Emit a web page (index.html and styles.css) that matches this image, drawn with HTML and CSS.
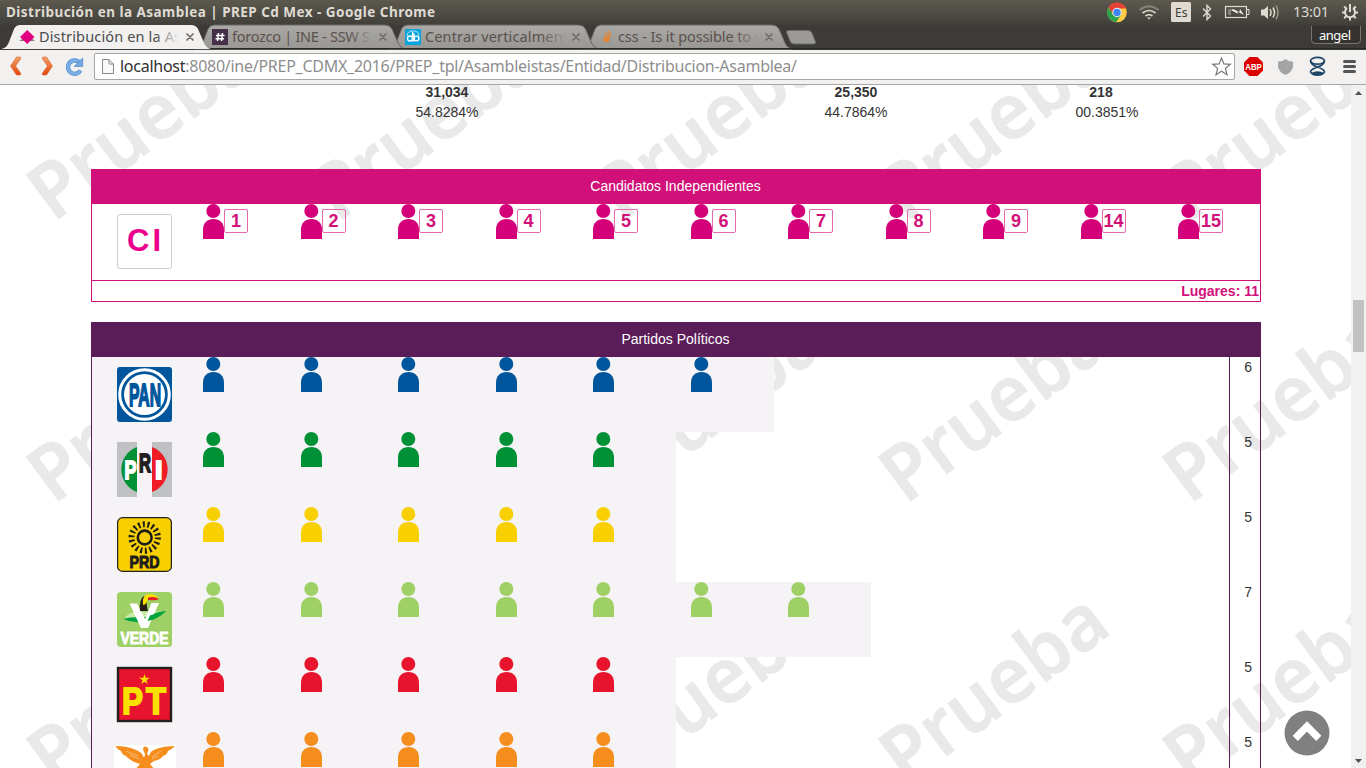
FILE: index.html
```html
<!DOCTYPE html>
<html lang="es">
<head>
<meta charset="utf-8">
<title>Distribución en la Asamblea | PREP Cd Mex</title>
<link rel="stylesheet" href="styles.css">
</head>
<body>
<svg class="defs" width="0" height="0">
  <defs>
    <symbol id="person" viewBox="0 0 21 35"><circle cx="10.3" cy="7" r="7"/><path d="M0 35V25.5C0 19 4.500 15 10.500 15S21 19 21 25.500V35z"/></symbol>
  </defs>
</svg>
<header class="browser">
  <svg class="frame" width="1366" height="50" viewBox="0 0 1366 50">
    <defs>
      <linearGradient id="bar" x1="0" y1="0" x2="0" y2="1"><stop offset="0" stop-color="#5d594f"/><stop offset="1" stop-color="#403f3a"/></linearGradient>
      <linearGradient id="idle" x1="0" y1="0" x2="0" y2="1"><stop offset="0" stop-color="#aaa9a6"/><stop offset="1" stop-color="#989793"/></linearGradient>
      <linearGradient id="fa" gradientUnits="userSpaceOnUse" x1="155" x2="179" y1="0" y2="0"><stop offset="0" stop-color="#4c4c4c"/><stop offset="1" stop-color="#f2f1f0"/></linearGradient>
      <linearGradient id="fb" gradientUnits="userSpaceOnUse" x1="348" x2="373" y1="0" y2="0"><stop offset="0" stop-color="#5c504b"/><stop offset="1" stop-color="#a09f9c"/></linearGradient>
      <linearGradient id="fc" gradientUnits="userSpaceOnUse" x1="541" x2="566" y1="0" y2="0"><stop offset="0" stop-color="#5c504b"/><stop offset="1" stop-color="#a09f9c"/></linearGradient>
      <linearGradient id="fd" gradientUnits="userSpaceOnUse" x1="734" x2="760" y1="0" y2="0"><stop offset="0" stop-color="#5c504b"/><stop offset="1" stop-color="#a09f9c"/></linearGradient>
      <path id="tab" d="M-12 49C-7 48-6 46-4 42L1 29Q3 25 7 25H178Q183 25 185 29L191 43Q193 48 198 49z"/>
    </defs>
    <rect width="1366" height="50" fill="#3c3b37"/>
    <rect width="1366" height="25" fill="url(#bar)"/>
    <use href="#tab" x="594" fill="url(#idle)" stroke="#686762"/>
    <use href="#tab" x="400.500" fill="url(#idle)" stroke="#686762"/>
    <use href="#tab" x="207" fill="url(#idle)" stroke="#686762"/>
    <path d="M0 48.500H1366" stroke="#282824"/>
    <use href="#tab" x="13" fill="#f2f1f0"/>
    <path d="M788.500 30.500H808Q811 30.500 812 33L815.500 42Q816 44 813.500 44H794Q791.500 44 790.500 42L786.800 33Q786 30.500 788.500 30.500z" fill="#9c9b98" stroke="#6b6a66"/>
    <text class="wintitle" x="6" y="17" textLength="429">Distribución en la Asamblea | PREP Cd Mex - Google Chrome</text>
    <!-- favicons -->
    <path d="M19 41L23 38.500H32L35 41z" fill="#8a7b84"/><path d="M27.200 30L34.500 37L27.200 44L20 37z" fill="#e0007f"/>
    <rect x="212" y="29" width="16" height="16" fill="#453049"/><path d="M218.500 33L217.500 41M222.500 33L221.500 41M216 35.500H224.500M215.500 38.700H224" stroke="#fff" stroke-width="1.500"/>
    <rect x="405" y="29" width="16" height="16" fill="#08a4dc"/><g fill="none" stroke="#fff" stroke-width="1.300"><circle cx="410" cy="38.500" r="2.500"/><path d="M412.600 32V41.500M414 33.500V41.500"/><circle cx="416.500" cy="38.500" r="2.400"/><path d="M407 36Q407 31 413 31T419 36" stroke-width=".7"/></g>
    <path d="M601.500 39V43H610V39" fill="none" stroke="#999" stroke-width="1"/><path d="M603 41.200H609M603.200 39L609 40M603.500 36.300L609.500 38.800M605 33L610 37.500M608 30.700L611 36" stroke="#f07d20" stroke-width="1.300"/>
    <text class="tabtext" x="39" y="42" textLength="142" fill="url(#fa)">Distribución en la As</text>
    <text class="tabtext" x="232" y="42" textLength="138" fill="url(#fb)">forozco | INE - SSW S</text>
    <text class="tabtext" x="425" y="42" textLength="143" fill="url(#fc)">Centrar verticalment</text>
    <text class="tabtext" x="618" y="42" textLength="144" fill="url(#fd)">css - Is it possible to v</text>
    <path d="M186.500 33.500L193.500 40.500M193.500 33.500L186.500 40.500M379.500 33.500L386.500 40.500M386.500 33.500L379.500 40.500M572.500 33.500L579.500 40.500M579.500 33.500L572.500 40.500M765.500 33.500L772.500 40.500M772.500 33.500L765.500 40.500" stroke="#6e6a67" stroke-width="1.600"/>
    <!-- system tray -->
    <circle cx="1117" cy="12.500" r="9.800" fill="#fc4"/>
    <path d="M1108.500 7.500A9.800 9.800 0 0 1 1126 8.500H1117L1112.500 14z" fill="#e34133"/><path d="M1108.500 7.500A9.800 9.800 0 0 0 1116 22.200L1121 15L1113 14.500z" fill="#2aa34f"/>
    <circle cx="1117" cy="12.500" r="4.700" fill="#f3f3f3"/><circle cx="1117" cy="12.500" r="3.700" fill="#4284f4"/>
    <g fill="none" stroke-width="1.700"><path d="M1139.500 10Q1149 2.500 1158.500 10" stroke="#85827a"/><path d="M1142.500 13Q1149 8 1155.500 13M1145.500 16Q1149 13.500 1152.500 16" stroke="#dfdbd2"/></g><path d="M1147 17.500H1151L1149 19.500z" fill="#dfdbd2"/>
    <rect x="1171" y="2" width="20" height="20" rx="1.500" fill="#dfdbd2"/><text class="tray" x="1175" y="17" textLength="12.500" lengthAdjust="spacingAndGlyphs" fill="#3c3b37">Es</text>
    <path d="M1203 8.500L1210.500 16L1207 19.500V5.500L1210.500 9L1203 16.500" fill="none" stroke="#dfdbd2" stroke-width="1.400"/>
    <rect x="1225.500" y="6.500" width="21" height="11" fill="none" stroke="#dfdbd2" stroke-width="1.200"/><path d="M1228 9H1231V15H1228z" fill="#85827a"/><path d="M1247 9.500H1249V14.500H1247" fill="none" stroke="#dfdbd2"/><path d="M1231 10L1238 14L1237 11.500L1244 15L1240 9L1239.500 12L1233 9z" fill="#eeeae1"/>
    <path d="M1261 9.500H1264L1268 6V19L1264 15.500H1261z" fill="#dfdbd2"/><path d="M1270 9Q1272 12.500 1270 16M1273 7.500Q1276 12.500 1273 17.500" fill="none" stroke="#dfdbd2" stroke-width="1.500"/><path d="M1276 5.500Q1280 12.500 1276 19.500" fill="none" stroke="#99958b" stroke-width="1.500"/>
    <text class="clock" x="1293" y="17" textLength="36">13:01</text>
    <g fill="none" stroke="#dfdbd2" stroke-width="2"><path d="M1347 8.300A5 5 0 1 0 1353 8.300M1350 4V12"/><path d="M1346.500 8.800L1344.200 6.500M1353.500 8.800L1355.800 6.500M1345 12.500H1342M1355 12.500H1358M1346.500 15.800L1344.200 18.200M1353.500 15.800L1355.800 18.200M1350 17.500V20.500"/></g>
    <path d="M1311.500 26V40Q1311.500 43.500 1315 43.500H1357Q1360.500 43.500 1360.500 40V26" fill="#34332f" stroke="#77756f"/>
    <text class="user" x="1319" y="40" textLength="32">angel</text>
  </svg>
  <div class="toolbar">
    <svg class="nav" width="94" height="34" viewBox="0 50 94 34">
      <defs><linearGradient id="or" x1="0" y1="0" x2="0" y2="1"><stop stop-color="#f2a267"/><stop offset="1" stop-color="#e5450c"/></linearGradient></defs>
      <path d="M16.500 57H20Q21.500 57 20.500 59L15.500 66L20.500 73Q21.500 75 20 75H16.500L10.500 66z" fill="url(#or)" stroke="#d8622b" stroke-width=".6"/>
      <path d="M46.500 57H43Q41.500 57 42.500 59L47.500 66L42.500 73Q41.500 75 43 75H46.500L52.500 66z" fill="url(#or)" stroke="#d8622b" stroke-width=".6"/>
      <path d="M80.500 70.500A6.700 6.700 0 1 1 79 62" fill="none" stroke="#5a8fce" stroke-width="4.400"/><path d="M80.500 70.500A6.700 6.700 0 1 1 79 62" fill="none" stroke="#78aee4" stroke-width="3"/><path d="M82.700 58V66.500H74z" fill="#70a7df" stroke="#4f86c8" stroke-width=".7"/>
    </svg>
    <div class="omnibox">
      <svg width="1139" height="25" viewBox="95 54 1139 25">
        <path d="M102.500 59.500H109L113.500 64V73.500H102.500z" fill="#fafafa" stroke="#888"/><path d="M109 59.500V64H113.500" fill="none" stroke="#888"/>
        <text class="url" x="120" y="72" textLength="677"><tspan fill="#303030">localhost</tspan>:8080/ine/PREP_CDMX_2016/PREP_tpl/Asambleistas/Entidad/Distribucion-Asamblea/</text>
        <path d="M1221.500 58L1223.900 63.900L1230.300 64.300L1225.400 68.400L1227 74.700L1221.500 71.200L1216 74.700L1217.600 68.400L1212.700 64.300L1219.100 63.900z" fill="#fff" stroke="#777" stroke-width="1.200"/>
      </svg>
    </div>
    <svg class="ext" width="131" height="34" viewBox="1235 50 131 34">
      <path d="M1249.500 57H1257.500L1263 62.500V70.500L1257.500 76H1249.500L1244 70.500V62.500z" fill="#d00"/><text class="abp" x="1245.300" y="70" textLength="16.500" lengthAdjust="spacingAndGlyphs">ABP</text>
      <path d="M1285.500 59Q1289 62 1293 61.500V67Q1292 72 1285.500 75Q1279 72 1278 67V61.500Q1282 62 1285.500 59z" fill="#a5a5a5"/>
      <g fill="none" stroke="#1f4566" stroke-width="1.700"><ellipse cx="1317.500" cy="60.800" rx="7" ry="3.400"/><path d="M1310.500 61.500Q1311.500 65 1317.500 67Q1324.500 69.500 1324.500 72Q1323 75.200 1317.500 75.200T1310.500 72Q1310.500 69.500 1317.500 67Q1323.500 65 1324.500 61.500"/></g><path d="M1311 73Q1317.500 69.500 1324 73Q1323 75 1317.500 75T1311 73z" fill="#1f4566"/>
      <path d="M1344.500 61.500H1354.500M1344.500 66.500H1354.500M1344.500 71.500H1354.500" stroke="#555" stroke-width="3" stroke-linecap="round"/>
    </svg>
  </div>
</header>
<div class="viewport">
  <main class="page">
    <svg class="watermark" width="1351" height="683" viewBox="0 85 1351 683">
      <defs><pattern id="mark" patternUnits="userSpaceOnUse" x="20" y="36" width="284" height="282"><text class="mark" transform="translate(33.400 187) rotate(-36.700)" textLength="260" lengthAdjust="spacingAndGlyphs">Prueba</text></pattern></defs>
      <rect y="85" width="1351" height="683" fill="url(#mark)"/>
    </svg>
    <div class="content">
      <div class="totals">
        <div><b>31,034</b><span>54.8284%</span></div>
        <div><b>25,350</b><span>44.7864%</span></div>
        <div class="last"><b>218</b><span>00.3851%</span></div>
      </div>
      <section class="panel pink">
        <h2>Candidatos Independientes</h2>
        <div class="row">
          <div class="logo"><svg width="55" height="55" viewBox="0 0 55 55"><rect x=".5" y=".5" width="54" height="54" rx="2.500" fill="#fff" stroke="#ccc"/><text class="ci" x="10" y="37" textLength="34">CI</text></svg></div>
          <div class="seat"><svg><use href="#person"/></svg><b>1</b></div>
          <div class="seat"><svg><use href="#person"/></svg><b>2</b></div>
          <div class="seat"><svg><use href="#person"/></svg><b>3</b></div>
          <div class="seat"><svg><use href="#person"/></svg><b>4</b></div>
          <div class="seat"><svg><use href="#person"/></svg><b>5</b></div>
          <div class="seat"><svg><use href="#person"/></svg><b>6</b></div>
          <div class="seat"><svg><use href="#person"/></svg><b>7</b></div>
          <div class="seat"><svg><use href="#person"/></svg><b>8</b></div>
          <div class="seat"><svg><use href="#person"/></svg><b>9</b></div>
          <div class="seat"><svg><use href="#person"/></svg><b>14</b></div>
          <div class="seat"><svg><use href="#person"/></svg><b>15</b></div>
        </div>
        <div class="sum">Lugares: 11</div>
      </section>
      <section class="panel purple">
        <h2>Partidos Políticos</h2>
        <div class="party pan">
          <div class="seats">
            <div class="logo"><svg width="55" height="55" viewBox="0 0 55 55"><rect width="55" height="55" rx="3" fill="#00569d"/><circle cx="27.500" cy="27.500" r="24.800" fill="none" stroke="#fff" stroke-width="3"/><circle cx="27.500" cy="27.500" r="20.500" fill="#fff"/><text class="heavy" x="12" y="38.500" font-size="31" textLength="32" lengthAdjust="spacingAndGlyphs" fill="#00569d" stroke="#00569d">PAN</text></svg></div>
            <div class="seat"><svg><use href="#person"/></svg></div><div class="seat"><svg><use href="#person"/></svg></div><div class="seat"><svg><use href="#person"/></svg></div><div class="seat"><svg><use href="#person"/></svg></div><div class="seat"><svg><use href="#person"/></svg></div><div class="seat"><svg><use href="#person"/></svg></div>
          </div>
          <div class="count">6</div>
        </div>
        <div class="party pri">
          <div class="seats">
            <div class="logo"><svg width="55" height="55" viewBox="0 0 55 55"><path d="M0 0H20V55H0zM35 0H55V55H35z" fill="#bfc1c2"/><path d="M20 5A24 24 0 0 0 20 50z" fill="#009136"/><path d="M35 5A24 24 0 0 1 35 50z" fill="#ef1c25"/><text class="heavy" x="7.500" y="36.500" font-size="25" textLength="12" lengthAdjust="spacingAndGlyphs" fill="#fff" stroke="#fff">P</text><text class="heavy" x="22" y="29.500" font-size="25" textLength="12" lengthAdjust="spacingAndGlyphs" fill="#231f20" stroke="#231f20">R</text><text class="heavy" x="38" y="36.500" font-size="25" textLength="7.500" lengthAdjust="spacingAndGlyphs" fill="#fff" stroke="#fff">I</text></svg></div>
            <div class="seat"><svg><use href="#person"/></svg></div><div class="seat"><svg><use href="#person"/></svg></div><div class="seat"><svg><use href="#person"/></svg></div><div class="seat"><svg><use href="#person"/></svg></div><div class="seat"><svg><use href="#person"/></svg></div>
          </div>
          <div class="count">5</div>
        </div>
        <div class="party prd">
          <div class="seats">
            <div class="logo"><svg width="55" height="55" viewBox="0 0 55 55"><rect x=".6" y=".6" width="53.800" height="53.800" rx="5" fill="#f8cf00" stroke="#222" stroke-width="1.200"/><circle cx="27.700" cy="20.500" r="6.900" fill="none" stroke="#1d1d1b" stroke-width="2.600"/><circle cx="27.700" cy="20.500" r="13.200" fill="none" stroke="#1d1d1b" stroke-width="6" stroke-dasharray="2 2.608"/><text class="heavy" x="12.500" y="50.500" font-size="17" textLength="30" lengthAdjust="spacingAndGlyphs" fill="#1d1d1b" stroke="#1d1d1b">PRD</text></svg></div>
            <div class="seat"><svg><use href="#person"/></svg></div><div class="seat"><svg><use href="#person"/></svg></div><div class="seat"><svg><use href="#person"/></svg></div><div class="seat"><svg><use href="#person"/></svg></div><div class="seat"><svg><use href="#person"/></svg></div>
          </div>
          <div class="count">5</div>
        </div>
        <div class="party verde">
          <div class="seats">
            <div class="logo"><svg width="55" height="55" viewBox="0 0 55 55"><rect width="55" height="55" rx="4" fill="#9fd065"/><path d="M7 27Q13 18 24 20L48 19Q40 27 25 28z" fill="#cde9a8"/><path d="M6 27Q15 24 26 26Q37 20 49 19Q39 29 24 30Q15 31 6 27z" fill="#00a33e"/><path d="M12.500 11.500H20L28 27L34.500 11H42L31 36H24z" fill="#fff"/><path d="M33 23.500Q41 20 49 19Q41 27 30.500 29z" fill="#00a33e"/><path d="M23 19Q22 7 27 4L30 7Q29 12 31 19z" fill="#251d17"/><path d="M26 13Q25 4 30 2.500Q39 1 42 7L31 6Q30 13 26 13z" fill="#f8df00"/><path d="M31 5.500Q38 4 42 7Q39 9 31 8z" fill="#e21c2a"/><text class="heavy" x="3.500" y="51.500" font-size="17" textLength="48" lengthAdjust="spacingAndGlyphs" fill="#fff" stroke="#fff">VERDE</text></svg></div>
            <div class="seat"><svg><use href="#person"/></svg></div><div class="seat"><svg><use href="#person"/></svg></div><div class="seat"><svg><use href="#person"/></svg></div><div class="seat"><svg><use href="#person"/></svg></div><div class="seat"><svg><use href="#person"/></svg></div><div class="seat"><svg><use href="#person"/></svg></div><div class="seat"><svg><use href="#person"/></svg></div>
          </div>
          <div class="count">7</div>
        </div>
        <div class="party pt">
          <div class="seats">
            <div class="logo"><svg width="55" height="55" viewBox="0 0 55 55"><rect x="1" y="1" width="53" height="53" fill="#e8132c" stroke="#231f20" stroke-width="2.400"/><path d="M27.500 7L28.700 10.800H32.800L29.500 13.200L30.700 17L27.500 14.700L24.300 17L25.500 13.200L22.200 10.800H26.300z" fill="#f9e100"/><text class="heavy" x="5" y="47" font-size="36" textLength="21" lengthAdjust="spacingAndGlyphs" fill="#f9e100" stroke="#f9e100">P</text><text class="heavy" x="29" y="47" font-size="36" textLength="20" lengthAdjust="spacingAndGlyphs" fill="#f9e100" stroke="#f9e100">T</text></svg></div>
            <div class="seat"><svg><use href="#person"/></svg></div><div class="seat"><svg><use href="#person"/></svg></div><div class="seat"><svg><use href="#person"/></svg></div><div class="seat"><svg><use href="#person"/></svg></div><div class="seat"><svg><use href="#person"/></svg></div>
          </div>
          <div class="count">5</div>
        </div>
        <div class="party mc">
          <div class="seats">
            <div class="logo wide"><svg width="62" height="55" viewBox="0 0 62 55"><rect y="3" width="62" height="52" fill="#fff"/><path d="M1 4Q14 4 22 8Q28 10 29.500 15Q31 15 31 12Q29 9 29 6Q31 3 34 6Q35 9 33 11Q34 14 35 14Q36 9 42 7Q50 4 61 4Q57 8 54 9Q53 13 49 14Q46 18 40 19L36 22L42 29L37 29L38 45H22V29L20 29L26 22Q16 19 12 14Q8 13 7 9Q4 8 1 4z" fill="#f68e1e"/><path d="M12 9L24 14M16 13L25 17M47 9L38 15M44 14L38 17" stroke="#fff" stroke-width=".4"/></svg></div>
            <div class="seat"><svg><use href="#person"/></svg></div><div class="seat"><svg><use href="#person"/></svg></div><div class="seat"><svg><use href="#person"/></svg></div><div class="seat"><svg><use href="#person"/></svg></div><div class="seat"><svg><use href="#person"/></svg></div>
          </div>
          <div class="count">5</div>
        </div>
      </section>
    </div>
    <svg class="totop" width="46" height="46" viewBox="0 0 46 46"><circle cx="23" cy="23" r="22.500" fill="#808080"/><path d="M11.200 28.300L23 16.500L34.800 28.300" fill="none" stroke="#fff" stroke-width="7.300"/></svg>
  </main>
  <div class="scrollbar"><svg width="15" height="683" viewBox="0 0 15 683"><path d="M4 10L7.500 6L11 10zM4 674L7.500 678L11 674z" fill="#505050"/><rect x="2" y="215" width="11" height="52" fill="#c1c1c1"/></svg></div>
</div>
</body>
</html>
```
FILE: styles.css
```css
* { box-sizing: border-box; }
html, body { height: 100%; }
body {
  margin: 0;
  overflow: hidden;
  display: flex;
  flex-direction: column;
  font: 14px/20px "Liberation Sans", Arial, sans-serif;
  color: #333;
  background: #fff;
}
svg { display: block; flex: none; }
.defs { position: absolute; }

.browser { flex: none; height: 85px; background: #f2f1f0; border-bottom: 1px solid #a9a8a6; }
.frame { height: 50px; margin-bottom: -1px; }
.frame text, .url { font-family: "Noto Sans", "Open Sans", sans-serif; }
.wintitle { font-size: 13.5px; font-weight: 700; fill: #dfdbd2; }
.tabtext { font-size: 14.5px; }
.tray { font-size: 13px; }
.clock { font-size: 14.5px; fill: #dfdbd2; }
.user { font-size: 13px; fill: #fff; }
.toolbar { height: 35px; display: flex; padding-top: 1px; }
.omnibox { width: 1141px; height: 27px; margin-top: 3px; border: 1px solid #a7a6a4; border-radius: 2px; background: #fff; }
.url { font-size: 16px; fill: #8e8e8e; }
.abp { font: bold 8.5px "Liberation Sans", Arial, sans-serif; fill: #fff; }

.viewport { flex: 1; min-height: 0; display: flex; }
.page { position: relative; width: 1351px; overflow: hidden; }
.watermark { position: absolute; left: 0; top: 0; }
.mark { font: 600 77px "Noto Sans", "Open Sans", sans-serif; fill: #e9e9e9; stroke: #e9e9e9; stroke-width: .6; }
.content { position: relative; width: 1170px; margin-left: 91px; }

.totals { display: grid; grid-template-columns: 712px 106px 352px; height: 84px; }
.totals > div { display: flex; flex-direction: column; align-items: center; margin-top: -3px; }
.totals .last { padding-left: 44px; }
.totals .last b { margin-right: 12px; }

.panel h2 { margin: 0; height: 35px; line-height: 35px; font-size: 14px; font-weight: 400; text-align: center; color: #fff; }
.pink { color: #d21079; margin-bottom: 20px; }
.pink h2 { background: #d21079; padding-right: 1px; }
.row { height: 76px; display: flex; border-left: 1px solid #d21079; border-right: 1px solid #d21079; }
.logo { width: 96.5px; padding: 10px 0 0 25px; flex: none; }
.logo svg { overflow: visible; }
.logo.wide { padding-left: 22px; }
.seat { width: 97.5px; padding-left: 14.5px; display: flex; flex: none; }
.seat svg { width: 21px; height: 35px; fill: currentColor; }
.seat b { width: 24px; height: 24px; margin-top: 5px; border: 1px solid #e667ab; border-radius: 2px; font-size: 18px; line-height: 22px; text-align: center; display: flex; justify-content: center; }
.pink .seat svg { fill: #d4007a; }
.pink .seat:last-child { width: 82px; }
.ci { font: bold 31px "Liberation Sans", Arial, sans-serif; fill: #ec008c; }
.sum { height: 22px; border: 1px solid #d21079; text-align: right; font-weight: 700; padding-right: 1px; }

.purple { border-left: 1px solid #5b1d57; border-right: 1px solid #5b1d57; }
.purple h2 { background: #5b1d57; margin: 0 -1px; padding-right: 1px; }
.party { height: 75px; display: flex; justify-content: space-between; }
.seats { display: flex; background: #f5f3f5; height: 75px; }
.count { width: 31px; border-left: 1px solid #5b1d57; padding-right: 8px; text-align: right; }
.heavy { font-family: "Liberation Sans", Arial, sans-serif; font-weight: 700; stroke-width: 1.8; }
.prd .heavy, .verde .heavy { stroke-width: 1; }
.pan .seat { color: #00569d; }
.pri .seat { color: #009136; }
.prd .seat { color: #f8cf00; }
.verde .seat { color: #9fd065; }
.pt .seat { color: #e8132c; }
.mc .seat { color: #f68e1e; }
.totop { position: absolute; left: 1284px; top: 625px; }
.scrollbar { width: 15px; background: #f1f1f1; }
```
